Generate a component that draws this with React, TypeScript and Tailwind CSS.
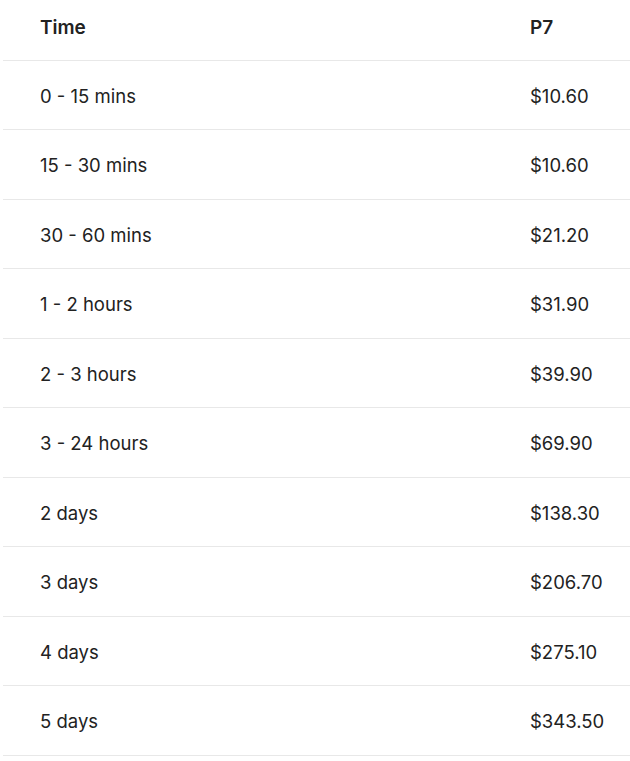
const rows: [string, string][] = [
  ["0 - 15 mins", "$10.60"],
  ["15 - 30 mins", "$10.60"],
  ["30 - 60 mins", "$21.20"],
  ["1 - 2 hours", "$31.90"],
  ["2 - 3 hours", "$39.90"],
  ["3 - 24 hours", "$69.90"],
  ["2 days", "$138.30"],
  ["3 days", "$206.70"],
  ["4 days", "$275.10"],
  ["5 days", "$343.50"],
];

export default function App() {
  return (
    <div className="bg-white w-[630px] h-[761px] pl-[3px] text-[#222222] font-['Inter',sans-serif]">
      <table className="w-full border-collapse">
        <thead>
          <tr className="border-b border-[#e8e8e8]">
            <th className="h-[60px] pl-[37px] pb-[3px] text-left text-[19px] font-semibold align-middle">Time</th>
            <th className="h-[60px] w-[100px] pl-0 pb-[3px] text-left text-[19px] font-semibold align-middle">P7</th>
          </tr>
        </thead>
        <tbody>
          {rows.map(([t, p], i) => (
            <tr key={i} className="border-b border-[#e8e8e8]">
              <td className={`${i % 2 === 0 ? "h-[69px]" : "h-[70px]"} pl-[37px] pt-[4px] text-[18.5px] align-middle`}>{t}</td>
              <td className="pt-[4px] text-[18.5px] align-middle">{p}</td>
            </tr>
          ))}
        </tbody>
      </table>
    </div>
  );
}
